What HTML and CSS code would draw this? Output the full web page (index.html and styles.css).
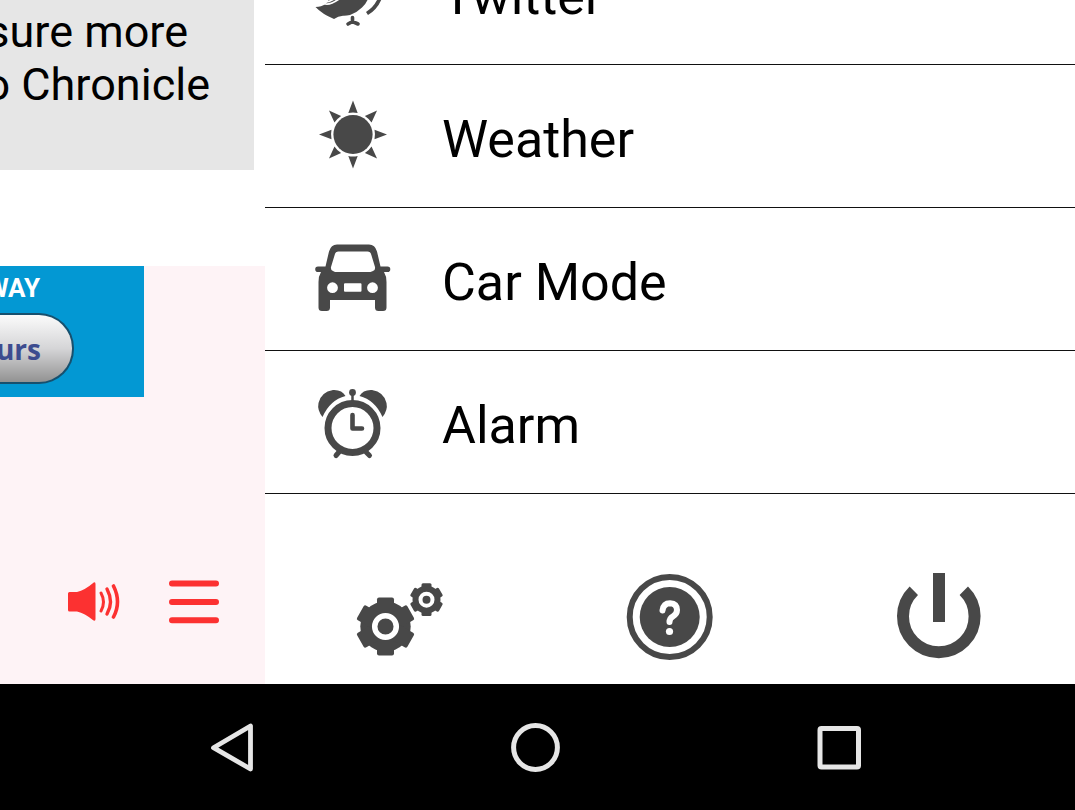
FILE: index.html
```html
<!DOCTYPE html>
<html lang="en">
<head>
<meta charset="utf-8">
<title>Menu</title>
<meta name="viewport" content="width=device-width, initial-scale=1">
<link rel="stylesheet" href="styles.css">
</head>
<body>
<div class="screen">
  <section class="page">
    <div class="story">
      <p class="line line-first">sure more</p>
      <p class="line">o Chronicle</p>
    </div>
    <div class="player">
      <div class="ad">
        <span class="ad-title">WAY</span>
        <button class="ad-button" type="button">urs</button>
      </div>
      <div class="controls">
        <button class="icon-button" type="button" aria-label="Volume">
          <svg width="52" height="52" viewBox="0 0 52 52">
            <path d="M0 17.500q0-1.500 1.500-1.500H9q8-2 15.500-8.500Q27.500 5 27.500 8V43q0 3-3 .8Q17 37.500 9 35.500H1.500Q0 35.500 0 34z" fill="#fc3131"/>
            <g fill="none" stroke="#fc3131" stroke-linecap="round">
              <path d="M33 17q5 9 0 18" stroke-width="3"/>
              <path d="M39 13q7 13 0 25" stroke-width="3.400"/>
              <path d="M45.500 10q8 16 0 31" stroke-width="3.600"/>
            </g>
          </svg>
        </button>
        <button class="icon-button" type="button" aria-label="Menu">
          <svg width="50" height="52" viewBox="0 0 50 52">
            <path d="M3 7.500H47M3 26H47M3 44.200H47" stroke="#fc3131" stroke-width="6" stroke-linecap="round"/>
          </svg>
        </button>
      </div>
    </div>
  </section>

  <aside class="drawer">
    <nav class="menu">
      <button class="menu-item" type="button">
        <svg width="80" height="80" viewBox="0 0 80 80">
          <path d="M3.500 54q6 0 10-3l6-7L50 30l7 10q0 8-7 14.500q-5 5-12 7.500q-4 1-7 .8q-5 .5-9 3.200Q10 61 3.500 54z" fill="#484848"/>
          <path d="M10 47.500q3 2 7 1l6-3M12 50.500q5 2.500 15-4.500" fill="none" stroke="#fff" stroke-width="1.800"/>
          <path d="M68 45q-4 10-13 15.500" fill="none" stroke="#484848" stroke-width="3.800"/>
          <path d="M40.500 64.500v4M36 71l4.500-2.500 5.500 2.500" fill="none" stroke="#484848" stroke-width="3.600" stroke-linecap="round"/>
        </svg>
        <span class="menu-label">Twitter</span>
      </button>
      <button class="menu-item" type="button">
        <svg width="80" height="80" viewBox="0 0 80 80" fill="#484848">
          <circle cx="41" cy="38.500" r="19.600"/>
          <path d="M41 4.500l4.700 12.500q-4.700-1-9.400 0z"/>
          <path d="M41 4.500l4.700 12.500q-4.700-1-9.400 0z" transform="rotate(45 41 38.500)"/>
          <path d="M41 4.500l4.700 12.500q-4.700-1-9.400 0z" transform="rotate(90 41 38.500)"/>
          <path d="M41 4.500l4.700 12.500q-4.700-1-9.400 0z" transform="rotate(135 41 38.500)"/>
          <path d="M41 4.500l4.700 12.500q-4.700-1-9.400 0z" transform="rotate(180 41 38.500)"/>
          <path d="M41 4.500l4.700 12.500q-4.700-1-9.400 0z" transform="rotate(225 41 38.500)"/>
          <path d="M41 4.500l4.700 12.500q-4.700-1-9.400 0z" transform="rotate(270 41 38.500)"/>
          <path d="M41 4.500l4.700 12.500q-4.700-1-9.400 0z" transform="rotate(315 41 38.500)"/>
        </svg>
        <span class="menu-label">Weather</span>
      </button>
      <button class="menu-item" type="button">
        <svg width="80" height="80" viewBox="0 0 80 80">
          <path fill="#484848" fill-rule="evenodd" d="M25 5.500H57q6 0 8 7l3.500 15H75.500a2.700 2.700 0 0 1 0 5.600H72q2.500 4 2.500 10V68.500q0 3.500-3.500 3.500H66.500q-3.500 0-3.500-3.500V61H18v7.500q0 3.500-3.500 3.500H10Q6.500 72 6.500 68.500V43q0-6 2.500-10H6a2.700 2.700 0 0 1 0-5.600H13.500L17 12.500q2-7 8-7zM26.500 12.500q-3 0-3.700 3L19 28q-.5 3 2 4l2 1H58.500l2.500-1q2.500-1 2-4L59.200 15.500q-.7-3-3.700-3zM20.500 43.300a5.400 5.400 0 1 0 0 10.800a5.400 5.400 0 1 0 0-10.800zM60.500 43.300a5.400 5.400 0 1 0 0 10.800a5.400 5.400 0 1 0 0-10.800zM33 44.300q-1 0-1 1v6.500q0 1 1 1H48.500q1 0 1-1V45.300q0-1-1-1z"/>
        </svg>
        <span class="menu-label">Car Mode</span>
      </button>
      <button class="menu-item" type="button">
        <svg width="80" height="80" viewBox="0 0 80 80">
          <circle cx="40.500" cy="46" r="24.500" fill="none" stroke="#484848" stroke-width="7"/>
          <path d="M10.500 35Q5 28 6.500 21Q9 10 21 8Q30 7.500 33.500 14Q18 18 10.500 35zM70.500 35Q76 28 74.500 21Q72 10 60 8Q51 7.500 47.500 14Q63 18 70.500 35z" fill="#484848"/>
          <circle cx="40.500" cy="10.500" r="3.400" fill="#484848"/>
          <path d="M40.500 12V22" stroke="#484848" stroke-width="2.500"/>
          <path d="M40.500 33V46.500H50" fill="none" stroke="#484848" stroke-width="4.600" stroke-linecap="round" stroke-linejoin="round"/>
          <path d="M27 70l-3 3.500M54 70l3.500 3.500" stroke="#484848" stroke-width="5" stroke-linecap="round"/>
        </svg>
        <span class="menu-label">Alarm</span>
      </button>
    </nav>

    <div class="actions">
      <button class="icon-button" type="button" aria-label="Settings">
        <svg width="90" height="90" viewBox="0 0 90 90">
          <g fill="#484848">
            <circle cx="30.500" cy="54.500" r="25.200"/>
            <rect x="22" y="25.500" width="17" height="58" rx="2"/>
            <rect x="22" y="25.500" width="17" height="58" rx="2" transform="rotate(60 30.500 54.500)"/>
            <rect x="22" y="25.500" width="17" height="58" rx="2" transform="rotate(120 30.500 54.500)"/>
          </g>
          <circle cx="30.500" cy="54.500" r="10.800" fill="none" stroke="#fff" stroke-width="5.500"/>
          <g fill="#484848">
            <circle cx="71.500" cy="27.700" r="14"/>
            <rect x="66.500" y="11.300" width="10" height="32.800" rx="1.500"/>
            <rect x="66.500" y="11.300" width="10" height="32.800" rx="1.500" transform="rotate(60 71.500 27.700)"/>
            <rect x="66.500" y="11.300" width="10" height="32.800" rx="1.500" transform="rotate(120 71.500 27.700)"/>
          </g>
          <circle cx="71.500" cy="27.700" r="6" fill="none" stroke="#fff" stroke-width="4"/>
        </svg>
      </button>
      <button class="icon-button" type="button" aria-label="Help">
        <svg width="90" height="90" viewBox="0 0 90 90">
          <circle cx="44.700" cy="45" r="40" fill="none" stroke="#484848" stroke-width="6"/>
          <circle cx="44.700" cy="45" r="30" fill="#484848"/>
          <path d="M37.500 38.500q1-7.200 7.500-7.200q7 .5 7 6.800q0 4-4 6.200q-3.500 2-3.500 5.700" fill="none" stroke="#fff" stroke-width="6" stroke-linecap="round"/>
          <circle cx="44.500" cy="59.500" r="3.600" fill="#fff"/>
        </svg>
      </button>
      <button class="icon-button" type="button" aria-label="Power">
        <svg width="90" height="90" viewBox="0 0 90 90">
          <path d="M38 1H50V50H38z" fill="#484848"/>
          <path d="M18.800 18.800A35.800 35.800 0 1 0 68.800 18.800" fill="none" stroke="#484848" stroke-width="12"/>
        </svg>
      </button>
    </div>
  </aside>
</div>

<nav class="system-bar">
  <button class="icon-button" type="button" aria-label="Back">
    <svg width="50" height="50" viewBox="0 0 50 50">
      <path d="M43.500 3V46L6.500 24.700z" fill="none" stroke="#e6e6e6" stroke-width="4.800" stroke-linejoin="round"/>
    </svg>
  </button>
  <button class="icon-button" type="button" aria-label="Home">
    <svg width="50" height="50" viewBox="0 0 50 50">
      <circle cx="24.500" cy="24.500" r="21.900" fill="none" stroke="#e6e6e6" stroke-width="5"/>
    </svg>
  </button>
  <button class="icon-button" type="button" aria-label="Recent apps">
    <svg width="50" height="50" viewBox="0 0 50 50">
      <rect x="5" y="5.500" width="38.500" height="38.500" rx="1.500" fill="none" stroke="#e6e6e6" stroke-width="5"/>
    </svg>
  </button>
</nav>
</body>
</html>
```

FILE: styles.css
```css
* {
  box-sizing: border-box;
}

body {
  margin: 0;
  height: 100vh;
  display: flex;
  flex-direction: column;
  overflow: hidden;
  background: #fff;
  color: #000;
  font-family: Roboto, "Liberation Sans", sans-serif;
}

button {
  font: inherit;
  color: inherit;
  border: 0;
  margin: 0;
  padding: 0;
  background: none;
  cursor: pointer;
}

svg {
  display: block;
  flex: none;
}

.screen {
  flex: 1;
  min-height: 0;
  display: grid;
  grid-template-columns: 265px 1fr;
  grid-template-rows: minmax(0, 1fr);
}

.page {
  display: flex;
  flex-direction: column;
  gap: 96px;
  overflow: hidden;
}

.story {
  display: flex;
  flex-direction: column;
  align-items: flex-end;
  margin-right: 11px;
  padding: 5px 44px 59px 0;
  background: #e6e6e6;
}

.line {
  margin: 0;
  font-size: 45px;
  line-height: 53px;
  white-space: nowrap;
}

.line-first {
  padding-right: 22px;
}

.player {
  flex: 1;
  display: flex;
  flex-direction: column;
  justify-content: space-between;
  background: #fef3f6;
}

.ad {
  width: 144px;
  padding: 7px 0 13px;
  display: flex;
  flex-direction: column;
  align-items: flex-start;
  gap: 10px;
  background: #0398d3;
}

.ad-title {
  width: 40px;
  display: flex;
  justify-content: flex-end;
  color: #fff;
  font-size: 26px;
  font-weight: 700;
  line-height: 30px;
}

.ad-button {
  width: 74px;
  height: 71px;
  padding-right: 31px;
  display: flex;
  align-items: center;
  justify-content: flex-end;
  border: 2px solid #17506e;
  border-left: 0;
  border-radius: 0 35px 35px 0;
  background: linear-gradient(#fbfbfb, #d5d5d7 50%, #929292);
  color: #3d4c8f;
  font-family: "Open Sans", sans-serif;
  font-size: 28px;
  font-weight: 700;
}

.controls {
  display: flex;
  justify-content: flex-end;
  gap: 49px;
  padding: 0 46px 56px 0;
}

.drawer {
  display: flex;
  flex-direction: column;
  justify-content: flex-end;
  overflow: hidden;
}

.menu-item {
  width: 100%;
  height: 143px;
  padding-left: 47px;
  display: flex;
  align-items: center;
  gap: 50px;
  border-bottom: 1px solid #111;
}

.menu-label {
  padding-top: 7px;
  font-size: 52px;
  line-height: 60px;
}

.actions {
  flex: none;
  height: 190px;
  padding-bottom: 22px;
  display: grid;
  grid-template-columns: repeat(3, 1fr);
  justify-items: center;
  align-items: end;
}

.system-bar {
  flex: none;
  height: 126px;
  padding: 2px 4px 0 0;
  display: grid;
  grid-template-columns: repeat(3, 304px);
  justify-content: center;
  justify-items: center;
  align-items: center;
  background: #000;
}
```
